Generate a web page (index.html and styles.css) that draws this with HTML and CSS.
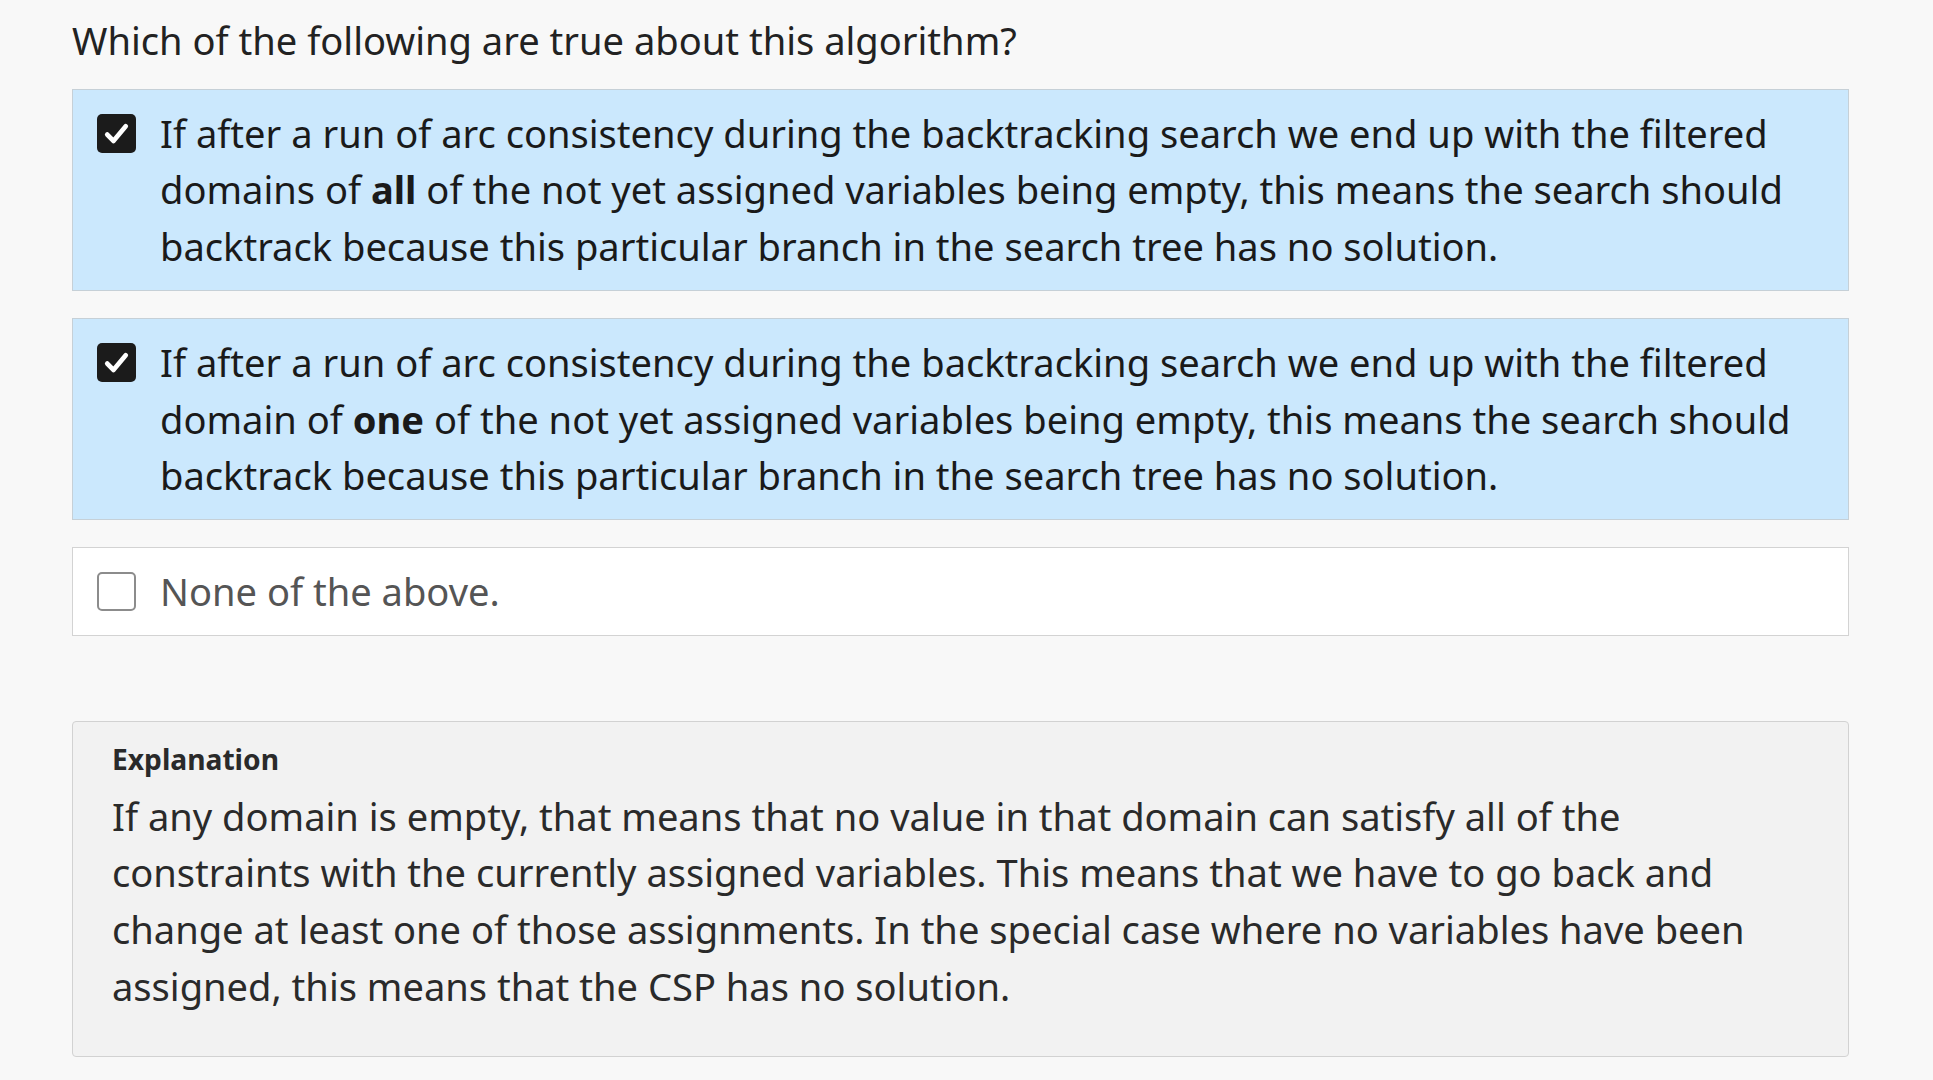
FILE: index.html
```html
<!DOCTYPE html>
<html lang="en">
<head>
<meta charset="utf-8">
<title>Question</title>
<link rel="stylesheet" href="styles.css">
</head>
<body>
<main class="quiz">
  <p class="question">Which of the following are true about this algorithm?</p>
  <div class="options">
    <label class="option selected">
      <span class="box checked"><svg viewBox="0 0 38 38" width="38" height="38"><path d="M10 20 L16 26.3 L28 12" fill="none" stroke="#fff" stroke-width="4.6" stroke-linecap="round" stroke-linejoin="round"/></svg></span>
      <span class="text">If after a run of arc consistency during the backtracking search we end up with the filtered domains of <b>all</b> of the not yet assigned variables being empty, this means the search should backtrack because this particular branch in the search tree has no solution.</span>
    </label>
    <label class="option selected">
      <span class="box checked"><svg viewBox="0 0 38 38" width="38" height="38"><path d="M10 20 L16 26.3 L28 12" fill="none" stroke="#fff" stroke-width="4.6" stroke-linecap="round" stroke-linejoin="round"/></svg></span>
      <span class="text">If after a run of arc consistency during the backtracking search we end up with the filtered domain of <b>one</b> of the not yet assigned variables being empty, this means the search should backtrack because this particular branch in the search tree has no solution.</span>
    </label>
    <label class="option">
      <span class="box"></span>
      <span class="text muted">None of the above.</span>
    </label>
  </div>
  <section class="explanation">
    <h3 class="exp-title">Explanation</h3>
    <p class="exp-text">If any domain is empty, that means that no value in that domain can satisfy all of the constraints with the currently assigned variables. This means that we have to go back and change at least one of those assignments. In the special case where no variables have been assigned, this means that the CSP has no solution.</p>
  </section>
</main>
</body>
</html>
```
FILE: styles.css
```css
html, body {
  margin: 0;
  padding: 0;
  background: #f8f8f8;
}
body {
  font-family: "Noto Sans", "Open Sans", sans-serif;
  color: #1c1c1c;
}
.quiz {
  width: 1777px;
  margin-left: 72px;
  padding-top: 12px;
}
.question {
  margin: 0 0 20px 0;
  font-size: 38.1px;
  line-height: 56.7px;
  color: #222;
}
.options {
  display: flex;
  flex-direction: column;
  gap: 27px;
}
.option {
  display: flex;
  align-items: flex-start;
  gap: 24px;
  padding: 15px 30px 15px 24px;
  border: 1px solid #d3d3d3;
  background: #fff;
  font-size: 38.1px;
  line-height: 56.7px;
}
.option.selected {
  background: #cbe8fd;
  border-color: #c6d0d7;
}
.box {
  flex: 0 0 auto;
  width: 39px;
  height: 39px;
  margin-top: 9px;
  box-sizing: border-box;
  border: 2px solid #8c8c8c;
  border-radius: 5px;
  background: #fff;
}
.box.checked {
  border: none;
  background: #1b1b1b;
}
.box svg {
  display: block;
  width: 39px;
  height: 39px;
}
.text {
  color: #1a1a1a;
}
.text b {
  font-weight: 700;
}
.text.muted {
  color: #555;
}
.explanation {
  margin-top: 85px;
  padding: 15px 39px 42px 39px;
  background: #f2f2f2;
  border: 1px solid #d2d2d2;
  border-radius: 4px;
}
.exp-title {
  margin: 0 0 6px 0;
  font-size: 28.2px;
  line-height: 45px;
  font-weight: 700;
  color: #2a2a2a;
}
.exp-text {
  margin: 0;
  font-size: 38.1px;
  line-height: 56.7px;
  color: #2a2a2a;
}
```
